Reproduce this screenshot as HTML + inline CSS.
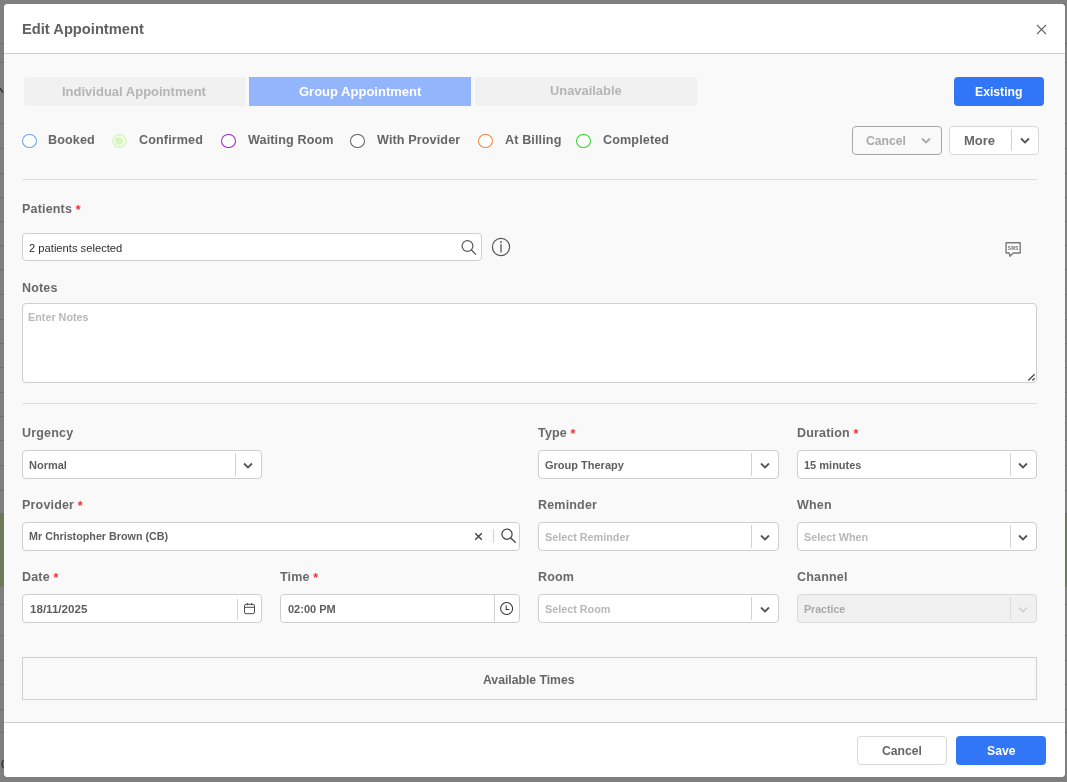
<!DOCTYPE html>
<html><head><meta charset="utf-8">
<style>
*{box-sizing:border-box;margin:0;padding:0}
html,body{width:1067px;height:782px;overflow:hidden}
body{background:#7f7f7f;font-family:"Liberation Sans",sans-serif;position:relative;color:#666}
.a{position:absolute}
.t{position:absolute;white-space:nowrap;line-height:1;will-change:transform}
.modal{position:absolute;left:3.5px;top:4px;width:1061px;height:773.3px;background:#f9f9f9;border-radius:4px}
.lbl{position:absolute;font-size:12.5px;font-weight:700;color:#696969;letter-spacing:0.18px;white-space:nowrap;line-height:1;will-change:transform}
.req{color:#f23030;font-size:12.6px;margin-left:3.6px;position:relative;top:0.6px}
.tab{position:absolute;top:77px;height:29px;background:#f1f1f1}
.rad{position:absolute;top:133.7px;width:14.6px;height:14.3px;border-radius:50%;border:1.3px solid #777;background:#fff}
.rt{position:absolute;top:133.8px;font-size:12.6px;font-weight:700;color:#666;letter-spacing:0.12px;line-height:1;white-space:nowrap;will-change:transform}
.inp{position:absolute;background:#fff;border:1px solid #cecece;border-radius:4px}
.it{position:absolute;font-size:11px;font-weight:700;color:#5e5e5e;white-space:nowrap;line-height:1;will-change:transform}
.ph{position:absolute;font-size:10.8px;font-weight:700;color:#b8b8b8;white-space:nowrap;line-height:1;will-change:transform}
.hr{position:absolute;left:22px;width:1015px;height:1px;background:#dcdcdc}
.dv{position:absolute;width:1px;background:#d2d2d2}
.chev{position:absolute}
</style></head><body>
<!-- bg -->
<div class="a" style="left:0;top:514px;width:1067px;height:73px;background:#6c7a5b"></div>
<div class="a" style="left:0;top:42.7px;width:1067px;height:1px;background:#6e6e6e"></div>
<div class="a" style="left:0;top:62.1px;width:1067px;height:1px;background:#6e6e6e"></div>
<div class="a" style="left:0;top:122.8px;width:1067px;height:1px;background:#6e6e6e"></div>
<div class="a" style="left:0;top:148.1px;width:1067px;height:1px;background:#6e6e6e"></div>
<div class="a" style="left:0;top:173.1px;width:1067px;height:1px;background:#6e6e6e"></div>
<div class="a" style="left:0;top:197.2px;width:1067px;height:1px;background:#6e6e6e"></div>
<div class="a" style="left:0;top:221.1px;width:1067px;height:1px;background:#6e6e6e"></div>
<div class="a" style="left:0;top:244.7px;width:1067px;height:1px;background:#6e6e6e"></div>
<div class="a" style="left:0;top:268.5px;width:1067px;height:1px;background:#6e6e6e"></div>
<div class="a" style="left:0;top:294.0px;width:1067px;height:1px;background:#6e6e6e"></div>
<div class="a" style="left:0;top:318.5px;width:1067px;height:1px;background:#6e6e6e"></div>
<div class="a" style="left:0;top:343.1px;width:1067px;height:1px;background:#6e6e6e"></div>
<div class="a" style="left:0;top:367.2px;width:1067px;height:1px;background:#6e6e6e"></div>
<div class="a" style="left:0;top:391.8px;width:1067px;height:1px;background:#6e6e6e"></div>
<div class="a" style="left:0;top:415.7px;width:1067px;height:1px;background:#6e6e6e"></div>
<div class="a" style="left:0;top:439.9px;width:1067px;height:1px;background:#6e6e6e"></div>
<div class="a" style="left:0;top:464.9px;width:1067px;height:1px;background:#6e6e6e"></div>
<div class="a" style="left:0;top:489.5px;width:1067px;height:1px;background:#6e6e6e"></div>
<div class="a" style="left:0;top:513.0px;width:1067px;height:1px;background:#6e6e6e"></div>
<div class="a" style="left:0;top:604.0px;width:1067px;height:1px;background:#6e6e6e"></div>
<div class="a" style="left:0;top:634.7px;width:1067px;height:1px;background:#6e6e6e"></div>
<div class="a" style="left:0;top:659.5px;width:1067px;height:1px;background:#6e6e6e"></div>
<div class="a" style="left:0;top:683.8px;width:1067px;height:1px;background:#6e6e6e"></div>
<div class="a" style="left:0;top:708.6px;width:1067px;height:1px;background:#6e6e6e"></div>
<div class="a" style="left:0;top:732.4px;width:1067px;height:1px;background:#6e6e6e"></div>
<svg class="a" style="left:0;top:86px" width="4" height="8" viewBox="0 0 4 8"><path d="M-1 1L3 6.5" stroke="#333" stroke-width="1.4"/></svg>
<svg class="a" style="left:0;top:759px" width="4" height="10" viewBox="0 0 4 10"><path d="M3.5 1Q0.5 5 3.5 9" fill="none" stroke="#333" stroke-width="1.4"/></svg>
<!-- modal frame -->
<div class="modal"></div>
<div class="a" style="left:3.5px;top:4px;width:1061px;height:50px;background:#fff;border-bottom:1px solid #d0d0d0;border-radius:4px 4px 0 0"></div>
<div class="t" style="left:22px;top:21.5px;font-size:14.7px;font-weight:700;color:#616161">Edit Appointment</div>
<svg class="a" style="left:1036px;top:23.5px" width="11" height="11" viewBox="0 0 11 11"><path d="M1 1L10 10M10 1L1 10" stroke="#666" stroke-width="1.1"/></svg>
<div class="a" style="left:3.5px;top:722px;width:1061px;height:55.3px;background:#fff;border-top:1px solid #d0d0d0;border-radius:0 0 4px 4px"></div>

<!-- tabs -->
<div class="tab" style="left:24px;width:222px;border-radius:3px 0 0 3px"></div>
<div class="tab" style="left:249px;width:222px;background:#93b5fc"></div>
<div class="tab" style="left:475px;width:222px;border-radius:0 3px 3px 0"></div>
<div class="t" style="left:62px;top:84.6px;font-size:13px;font-weight:700;color:#b5b5b5">Individual Appointment</div>
<div class="t" style="left:299px;top:84.6px;font-size:13px;font-weight:700;color:#fff">Group Appointment</div>
<div class="t" style="left:550px;top:85.2px;font-size:12.9px;font-weight:700;color:#b5b5b5">Unavailable</div>
<div class="a" style="left:954px;top:77px;width:90px;height:29px;background:#3176f6;border-radius:4px"></div>
<div class="t" style="left:975px;top:86px;font-size:12.2px;font-weight:700;color:#fff">Existing</div>

<!-- status radios -->
<div class="rad" style="left:22px;border-color:#6d9ff2"></div>
<div class="rt" style="left:48px">Booked</div>
<div class="rad" style="left:112px;border:2px solid #dcf8c8"></div>
<div class="a" style="left:115.3px;top:137.3px;width:7.6px;height:7.6px;border-radius:50%;background:#d8f6bc"></div>
<div class="rt" style="left:139px">Confirmed</div>
<div class="rad" style="left:221px;border-color:#9a22c4"></div>
<div class="rt" style="left:248px">Waiting Room</div>
<div class="rad" style="left:350px;border-color:#606060"></div>
<div class="rt" style="left:377px">With Provider</div>
<div class="rad" style="left:478px;border-color:#f0843c"></div>
<div class="rt" style="left:505px">At Billing</div>
<div class="rad" style="left:576px;border-color:#28d828"></div>
<div class="rt" style="left:603px">Completed</div>

<!-- cancel / more -->
<div class="a" style="left:852px;top:126px;width:90px;height:29px;border:1px solid #a5a5a5;border-radius:4px;background:#f9f9f9"></div>
<div class="t" style="left:866px;top:134.5px;font-size:12.2px;font-weight:700;color:#aaa">Cancel</div>
<svg class="a" style="left:921px;top:137px" width="10" height="7" viewBox="0 0 10 7"><path d="M1 1.5L5 5.5L9 1.5" fill="none" stroke="#aaa" stroke-width="1.9"/></svg>
<div class="a" style="left:949px;top:126px;width:90px;height:29px;border:1px solid #d8d8d8;border-radius:4px;background:#fff"></div>
<div class="dv" style="left:1011px;top:129px;height:22px"></div>
<div class="t" style="left:964px;top:134px;font-size:13px;font-weight:700;color:#666">More</div>
<svg class="a" style="left:1020px;top:137px" width="10" height="7" viewBox="0 0 10 7"><path d="M1 1.5L5 5.5L9 1.5" fill="none" stroke="#555" stroke-width="1.8"/></svg>

<div class="hr" style="top:179px"></div>

<!-- patients -->
<div class="lbl" style="left:22px;top:203px">Patients<span class="req">*</span></div>
<div class="inp" style="left:22px;top:233px;width:460px;height:28px"></div>
<div class="t" style="left:29px;top:243px;font-size:11.2px;color:#2e2e2e">2 patients selected</div>
<svg class="a" style="left:458px;top:237px" width="22" height="22" viewBox="0 0 22 22"><circle cx="9.5" cy="9" r="5.4" fill="none" stroke="#555" stroke-width="1.2"/><path d="M13.5 13L18 17.6" stroke="#555" stroke-width="1.3"/></svg>
<svg class="a" style="left:490px;top:236px" width="22" height="22" viewBox="0 0 22 22"><circle cx="11" cy="11" r="8.6" fill="none" stroke="#555" stroke-width="1.2"/><path d="M11 8.2V16.5" stroke="#555" stroke-width="1.3"/><circle cx="11" cy="6" r="0.9" fill="#555"/></svg>
<svg class="a" style="left:1004px;top:241px;will-change:transform" width="18" height="17" viewBox="0 0 18 17"><path d="M2.1 1.7H16.2V12H9.2L5.9 15.2L5.3 12H2.1Z" fill="#fff" stroke="#7a7a7a" stroke-width="1.4" stroke-linejoin="round"/><text x="9.3" y="8.7" font-size="4.7" font-weight="700" letter-spacing="0.25" text-anchor="middle" fill="#6a6a6a" font-family="Liberation Sans">SMS</text></svg>

<!-- notes -->
<div class="lbl" style="left:22px;top:282px">Notes</div>
<div class="inp" style="left:22px;top:303px;width:1015px;height:80px"></div>
<div class="ph" style="left:27.5px;top:312px;font-size:10.8px">Enter Notes</div>
<svg class="a" style="left:1027px;top:373px" width="9" height="9" viewBox="0 0 9 9"><path d="M1.3 7.5L7.6 1.2M5.4 7.5L7.6 5.3" stroke="#444" stroke-width="1.3"/></svg>

<div class="hr" style="top:403px"></div>

<!-- row 1 -->
<div class="lbl" style="left:22px;top:427px">Urgency</div>
<div class="lbl" style="left:538px;top:427px">Type<span class="req">*</span></div>
<div class="lbl" style="left:797px;top:427px">Duration<span class="req">*</span></div>

<div class="inp" style="left:22px;top:450px;width:240px;height:29px"></div>
<div class="dv" style="left:235px;top:453px;height:23px"></div>
<div class="it" style="left:29px;top:460px">Normal</div>
<svg class="a" style="left:243px;top:462px" width="10" height="7" viewBox="0 0 10 7"><path d="M1 1.5L5 5.5L9 1.5" fill="none" stroke="#555" stroke-width="1.8"/></svg>

<div class="inp" style="left:538px;top:450px;width:241px;height:29px"></div>
<div class="dv" style="left:751px;top:453px;height:23px"></div>
<div class="it" style="left:545px;top:460px">Group Therapy</div>
<svg class="a" style="left:760px;top:462px" width="10" height="7" viewBox="0 0 10 7"><path d="M1 1.5L5 5.5L9 1.5" fill="none" stroke="#555" stroke-width="1.8"/></svg>

<div class="inp" style="left:797px;top:450px;width:240px;height:29px"></div>
<div class="dv" style="left:1010px;top:453px;height:23px"></div>
<div class="it" style="left:804px;top:460px">15 minutes</div>
<svg class="a" style="left:1018px;top:462px" width="10" height="7" viewBox="0 0 10 7"><path d="M1 1.5L5 5.5L9 1.5" fill="none" stroke="#555" stroke-width="1.8"/></svg>

<!-- row 2 -->
<div class="lbl" style="left:22px;top:499px">Provider<span class="req">*</span></div>
<div class="lbl" style="left:538px;top:499px">Reminder</div>
<div class="lbl" style="left:797px;top:499px">When</div>

<div class="inp" style="left:22px;top:522px;width:498px;height:29px"></div>
<div class="it" style="left:29px;top:531px;font-size:10.75px">Mr Christopher Brown (CB)</div>
<svg class="a" style="left:474px;top:532px" width="9" height="9" viewBox="0 0 9 9"><path d="M1.2 1.2L7.8 7.8M7.8 1.2L1.2 7.8" stroke="#444" stroke-width="1.4"/></svg>
<div class="dv" style="left:493px;top:529px;height:14px"></div>
<svg class="a" style="left:498px;top:526px" width="20" height="20" viewBox="0 0 20 20"><circle cx="9" cy="8.2" r="5.1" fill="none" stroke="#444" stroke-width="1.25"/><path d="M12.8 12L17.7 16.8" stroke="#444" stroke-width="1.3"/></svg>

<div class="inp" style="left:538px;top:522px;width:241px;height:29px"></div>
<div class="dv" style="left:751px;top:525px;height:23px"></div>
<div class="ph" style="left:545px;top:532px">Select Reminder</div>
<svg class="a" style="left:760px;top:534px" width="10" height="7" viewBox="0 0 10 7"><path d="M1 1.5L5 5.5L9 1.5" fill="none" stroke="#555" stroke-width="1.8"/></svg>

<div class="inp" style="left:797px;top:522px;width:240px;height:29px"></div>
<div class="dv" style="left:1010px;top:525px;height:23px"></div>
<div class="ph" style="left:804px;top:532px">Select When</div>
<svg class="a" style="left:1018px;top:534px" width="10" height="7" viewBox="0 0 10 7"><path d="M1 1.5L5 5.5L9 1.5" fill="none" stroke="#555" stroke-width="1.8"/></svg>

<!-- row 3 -->
<div class="lbl" style="left:22px;top:571px">Date<span class="req">*</span></div>
<div class="lbl" style="left:280px;top:571px">Time<span class="req">*</span></div>
<div class="lbl" style="left:538px;top:571px">Room</div>
<div class="lbl" style="left:797px;top:571px">Channel</div>

<div class="inp" style="left:22px;top:594px;width:240px;height:29px"></div>
<div class="dv" style="left:237px;top:599px;height:21px"></div>
<div class="it" style="left:29.5px;top:603.4px;font-size:11.6px">18/11/2025</div>
<svg class="a" style="left:243px;top:602px" width="13" height="13" viewBox="0 0 13 13"><rect x="1.5" y="2.3" width="10" height="9.4" rx="1.6" fill="none" stroke="#4a4a4a" stroke-width="1"/><path d="M1.5 5.3H11.5M4.3 1V3.3M8.7 1V3.3" stroke="#4a4a4a" stroke-width="1"/></svg>

<div class="inp" style="left:280px;top:594px;width:240px;height:29px"></div>
<div class="dv" style="left:494px;top:595px;height:27px"></div>
<div class="it" style="left:287.5px;top:604px;font-size:11px">02:00 PM</div>
<svg class="a" style="left:499px;top:601px" width="15" height="15" viewBox="0 0 15 15"><circle cx="7.6" cy="7.5" r="6" fill="none" stroke="#333" stroke-width="1.05"/><path d="M7.2 4.5V8.5H10.3" fill="none" stroke="#333" stroke-width="1.05"/></svg>

<div class="inp" style="left:538px;top:594px;width:241px;height:29px"></div>
<div class="dv" style="left:751px;top:597px;height:23px"></div>
<div class="ph" style="left:545px;top:604px">Select Room</div>
<svg class="a" style="left:760px;top:606px" width="10" height="7" viewBox="0 0 10 7"><path d="M1 1.5L5 5.5L9 1.5" fill="none" stroke="#555" stroke-width="1.8"/></svg>

<div class="inp" style="left:797px;top:594px;width:240px;height:29px;background:#f0f0f0;border-color:#dadada"></div>
<div class="dv" style="left:1010px;top:597px;height:23px;background:#dcdcdc"></div>
<div class="it" style="left:804px;top:603.7px;color:#a8a8a8;font-size:10.6px">Practice</div>
<svg class="a" style="left:1018px;top:606px" width="10" height="7" viewBox="0 0 10 7"><path d="M1 1.5L5 5.5L9 1.5" fill="none" stroke="#cfcfcf" stroke-width="1.6"/></svg>

<!-- available times -->
<div class="a" style="left:22px;top:657px;width:1015px;height:43px;border:1px solid #d0d0d0"></div>
<div class="t" style="left:483px;top:674px;font-size:12.2px;font-weight:700;color:#666">Available Times</div>

<!-- footer buttons -->
<div class="a" style="left:857px;top:736px;width:90px;height:29px;border:1px solid #d8d8d8;border-radius:4px;background:#fff"></div>
<div class="t" style="left:882px;top:745px;font-size:12.2px;font-weight:700;color:#666">Cancel</div>
<div class="a" style="left:956px;top:736px;width:90px;height:29px;background:#3176f6;border-radius:4px"></div>
<div class="t" style="left:987px;top:745px;font-size:12.2px;font-weight:700;color:#fff">Save</div>
</body></html>
